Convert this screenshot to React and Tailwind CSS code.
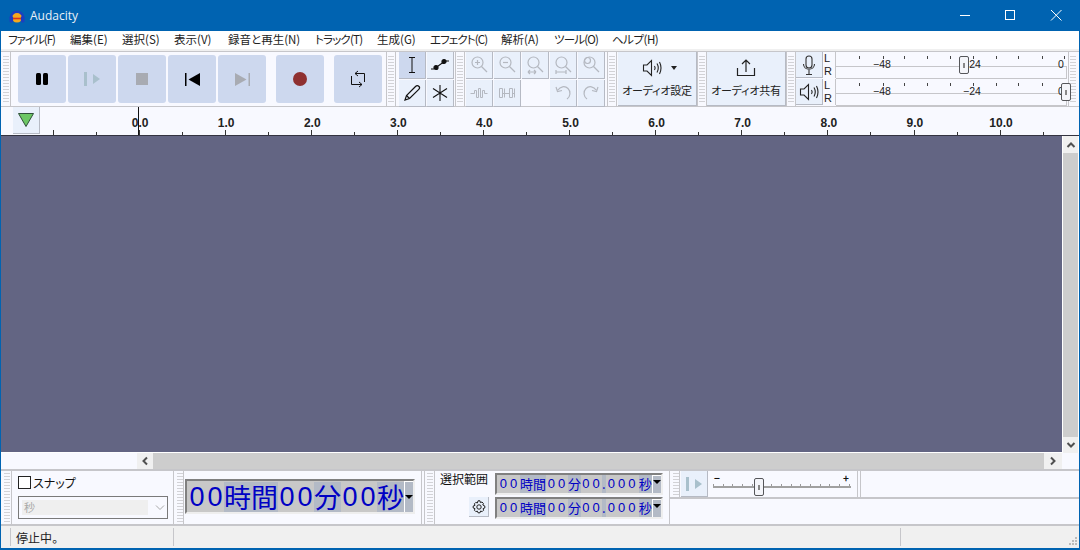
import React from 'react';

const jp = 'font-["Noto_Sans_CJK_JP","Noto_Sans",sans-serif] [font-feature-settings:"palt"]';

// つまみ (toolbar grip)
function Grip({ className = '' }) {
  return (
    <div className={'w-[6px] bg-[repeating-linear-gradient(180deg,#d2d2d6_0,#d2d2d6_1px,transparent_1px,transparent_3px)] ' + className} />
  );
}

function Line() {
  return <div className="w-[1px] shrink-0 bg-[#c6c6ca]" />;
}

function GripBlock({ ml = 'ml-[2px]', my = 'my-[4px]' }) {
  return (
    <>
      <Grip className={'shrink-0 mr-[1px] ' + ml + ' ' + my} />
      <Line />
    </>
  );
}

function TransportBtn({ children, className = '' }) {
  return (
    <div className={'w-[48px] h-[48px] rounded-[3px] bg-[#cdd8ee] flex items-center justify-center ' + className}>
      {children}
    </div>
  );
}

function SmallBtn({ children, className = 'bg-[#e9f0fb]' }) {
  return (
    <div className={'w-[27px] h-[27px] border-r border-b border-[#b6bac4] flex items-center justify-center ' + className}>
      {children}
    </div>
  );
}

function Icon({ size = 20, children, className = '', stroke = 'currentColor', sw = 1 }) {
  return (
    <svg width={size} height={size} viewBox={`0 0 ${size} ${size}`} fill="none" stroke={stroke} strokeWidth={sw} className={className}>
      {children}
    </svg>
  );
}

function ZoomIcon({ children }) {
  return (
    <Icon size={20} stroke="#b4b8c0" sw={1.2}>
      <circle cx="8.5" cy="7.5" r="5.5" />
      <path d="M12.5 11.5 L18 17" />
      {children}
    </Icon>
  );
}

function Wave({ gap }) {
  return (
    <Icon size={20} stroke="#b4b8c0" sw={1}>
      {gap ? (
        <path d="M2.500 5.500V14.500H5.500V5.500H2.500M7.500 5.500V14.500M5.500 10.500H7.500M7.500 10.500H12.500M12.500 5.500V14.500H15.500V5.500H12.500M17.500 5.500V14.500M15.500 10.500H17.500" />
      ) : (
        <path d="M1.500 10.500H5.500V7.500H7.500V14.500H9.500V5.500H11.500V14.500H13.500V7.500H15.500V10.500H18.500" />
      )}
    </Icon>
  );
}

function SpeakerIcon() {
  return (
    <Icon size={20} stroke="#222" sw={1.1}>
      <path d="M1.500 7H5L9.500 2.500V17.500L5 13H1.500Z" />
      <path d="M12.500 8C13.300 9.200 13.300 10.800 12.500 12" />
      <path d="M15 5.500C16.700 8.500 16.700 11.500 15 14.500" />
      <path d="M17.500 4C19.500 8 19.500 12 17.500 16" />
    </Icon>
  );
}

function MeterTicks() {
  const xs = [23, 47, 68, 91, 114, 137, 160, 182, 206, 228];
  return (
    <svg width="232" height="4" className="block">
      {xs.map((x) => (
        <line key={x} x1={x + 0.5} x2={x + 0.5} y1="0" y2="3" stroke="#444" />
      ))}
    </svg>
  );
}

function Meter({ thumbClass }) {
  return (
    <div className="relative w-[232px] h-full border-l border-[#c6c6ca]">
      <div className="pt-[4px] h-[14px]">
        <MeterTicks />
      </div>
      <div className="h-[13px] border-t border-b border-r border-[#c6c6ca]" />
      <div className="absolute left-0 top-[5px] w-full h-[14px] text-[10.5px] leading-[14px] text-[#222] flex font-['Liberation_Sans',sans-serif]">
        <span className="w-[37px]" />
        <span className="w-[17px]">−48</span>
        <span className="w-[73px]" />
        <span className="w-[17px]">−24</span>
        <span className="w-[78px]" />
        <span>0</span>
      </div>
      <div className={'absolute top-[4px] w-[10px] h-[18px] rounded-[2px] border border-[#55565a] bg-[#f4f5fa] flex items-center justify-center ' + thumbClass}>
        <div className="w-[2px] h-[5px] bg-[#888]" />
      </div>
    </div>
  );
}

function Cell({ text, dark, w, track = '' }) {
  return <span className={'flex items-center justify-center h-full ' + w + ' ' + track + ' ' + (dark ? 'bg-[#b3bac6]' : 'bg-[#c8c8c8]')}>{text}</span>;
}

function SmallTime() {
  const t = 'tracking-[3px] pl-[2px] font-["Liberation_Sans",sans-serif]';
  return (
    <div className="w-[168px] h-[22px] flex bg-[#c8c8c8] border-2 border-t-[#808080] border-l-[#808080] border-b-[#eeeeee] border-r-[#eeeeee] text-[13px] text-[#0000c4]">
      <div className="flex h-full pl-[1px] w-[155px] whitespace-nowrap leading-[18px]">
        <Cell text="00" w="w-[22px]" track={t} />
        <Cell text="時間" w="w-[26px]" dark />
        <Cell text="00" w="w-[22px]" track={t} />
        <Cell text="分" w="w-[13px]" dark />
        <Cell text="00" w="w-[21px]" track={t} />
        <Cell text="." w="w-[4px]" dark />
        <Cell text="000" w="w-[33px]" track={t} />
        <Cell text="秒" w="w-[14px]" dark />
      </div>
      <div className="w-[9px] h-full bg-[#b3bac6] border-l border-t border-white flex items-start justify-center pt-[4px]">
        <div className="w-0 h-0 border-x-[4px] border-x-transparent border-t-[4px] border-t-black" />
      </div>
    </div>
  );
}

function ScrollBtn({ d, className = 'w-[16px]' }) {
  return (
    <div className={'h-[16px] bg-[#f0f0f0] flex items-center justify-center ' + className}>
      <svg width="10" height="10" viewBox="0 0 10 10" fill="none" stroke="#505050" strokeWidth="2">
        <path d={d} />
      </svg>
    </div>
  );
}

function Ruler() {
  const ticks = [];
  for (let i = 0; i < 24; i++) ticks.push(i);
  return (
    <div className="h-[28px] flex bg-[#f8f9ff] shrink-0">
      <div className="w-[12px] shrink-0" />
      <div className="w-[27px] h-[27px] bg-[#e9f0fb] border-r border-b border-[#b6bac4] flex items-center justify-center shrink-0">
        <svg width="16" height="14" viewBox="0 0 16 14">
          <path d="M0.5 0.5H15.5L8 13.5Z" fill="#6cc764" stroke="#30503a" />
        </svg>
      </div>
      <div className="relative flex-1 flex flex-col min-w-0">
        <div className="h-[23px] flex items-end pl-[57px] text-[12px] leading-[14px] font-bold text-[#222] font-['Liberation_Sans',sans-serif]">
          {['0.0', '1.0', '2.0', '3.0', '4.0', '5.0', '6.0', '7.0', '8.0', '9.0', '10.0'].map((t) => (
            <span key={t} className="w-[86.1px] text-center shrink-0">{t}</span>
          ))}
        </div>
        <svg width="1039" height="5" className="block">
          {ticks.map((i) => (
            <line key={i} x1={Math.round(12.5 + i * 43.05) + 0.5} x2={Math.round(12.5 + i * 43.05) + 0.5} y1={i % 2 === 0 ? 0 : 2} y2="5" stroke="#333" />
          ))}
        </svg>
        <div className="absolute left-[98px] top-0 bottom-0 w-[1px] bg-[#111]" />
      </div>
    </div>
  );
}

export default function App() {
  return (
    <div className={'w-[1080px] h-[550px] overflow-hidden flex flex-col border-x border-b-2 border-[#0063b1] bg-[#f0f0f0] text-[#111] ' + jp}>
      {/* title bar */}
      <div className="h-[31px] shrink-0 bg-[#0063b1] flex items-center text-white -mx-[1px]">
        <svg width="16" height="16" viewBox="0 0 16 16" className="ml-[9px]">
          <circle cx="8" cy="9" r="5.5" fill="#f6a81c" />
          <path d="M1.800 10a6.200 6.200 0 0 1 12.400 0" fill="none" stroke="#1c3fc0" strokeWidth="2.400" />
          <rect x="0.500" y="8" width="3.600" height="6.500" rx="1.500" fill="#1c3fc0" />
          <rect x="11.900" y="8" width="3.600" height="6.500" rx="1.500" fill="#1c3fc0" />
          <path d="M4 10.500H12" stroke="#d83020" strokeWidth="1.600" />
        </svg>
        <span className="ml-[5px] text-[12px] text-[#e8f0f8] flex-1 font-['Open_Sans',sans-serif]">Audacity</span>
        <svg width="120" height="31" viewBox="0 0 120 31" fill="none" stroke="#fff">
          <path d="M0 15.5H10" />
          <rect x="45.5" y="10.5" width="9" height="9" />
          <path d="M91 10L101.5 20.5M101.5 10L91 20.5" />
        </svg>
      </div>

      {/* menu */}
      <div className="h-[18px] shrink-0 bg-white flex items-center text-[11.5px] text-[#222] whitespace-nowrap pl-[7px]">
        <span className="w-[62px] tracking-[-1px]">ファイル(F)</span>
        <span className="w-[52px]">編集(E)</span>
        <span className="w-[52px]">選択(S)</span>
        <span className="w-[54px]">表示(V)</span>
        <span className="w-[87px]">録音と再生(N)</span>
        <span className="w-[62px] tracking-[-0.8px]">トラック(T)</span>
        <span className="w-[53px]">生成(G)</span>
        <span className="w-[71px] tracking-[-0.9px]">エフェクト(C)</span>
        <span className="w-[53px]">解析(A)</span>
        <span className="w-[58px] tracking-[-0.8px]">ツール(O)</span>
        <span className="tracking-[-0.5px]">ヘルプ(H)</span>
      </div>
      <div className="h-[2px] shrink-0 bg-[#f0f0f0]" />

      {/* top toolbars */}
      <div className="h-[56px] shrink-0 flex border-y border-[#c6c6ca] bg-[#f8f9ff]">
        <GripBlock />
        <div className="flex items-center w-[375px] pl-[7px] shrink-0">
          <TransportBtn>
            <svg width="14" height="14"><rect x="1" y="1" width="5" height="12" rx="1.5" fill="#000" /><rect x="8" y="1" width="5" height="12" rx="1.5" fill="#000" /></svg>
          </TransportBtn>
          <TransportBtn className="ml-[2px]">
            <svg width="16" height="14"><rect x="0" y="0" width="3" height="14" fill="#a9c0cc" /><path d="M9 2V12L16 7Z" fill="#a9c0cc" /></svg>
          </TransportBtn>
          <TransportBtn className="ml-[2px]">
            <div className="w-[12px] h-[12px] bg-[#a8abb2]" />
          </TransportBtn>
          <TransportBtn className="ml-[2px]">
            <svg width="15" height="13"><rect x="0" y="0" width="1.5" height="13" fill="#000" /><path d="M3.5 6.5L15 0V13Z" fill="#000" /></svg>
          </TransportBtn>
          <TransportBtn className="ml-[2px]">
            <svg width="15" height="13"><rect x="13.5" y="0" width="1.5" height="13" fill="#a8abb2" /><path d="M0 0V13L11.5 6.5Z" fill="#a8abb2" /></svg>
          </TransportBtn>
          <TransportBtn className="ml-[10px]">
            <div className="w-[14px] h-[14px] rounded-full bg-[#8f3030]" />
          </TransportBtn>
          <TransportBtn className="ml-[10px]">
            <svg width="16" height="18" viewBox="0 0 16 18" fill="none" stroke="#111">
              <path d="M14.500 12V3.500H5M8 1L5 3.500L8 6" />
              <path d="M1.500 6V14.500H12M9 12L12 14.500L9 17" />
            </svg>
          </TransportBtn>
        </div>
        <Line />
        <GripBlock ml="ml-[1px]" />
        <div className="w-[59px] pl-[3px] grid grid-cols-[27px_27px] gap-x-[1px] gap-y-[1px] content-start shrink-0">
          <SmallBtn className="bg-[#cdd8ee]">
            <svg width="10" height="16" fill="none" stroke="#111"><path d="M2 .5H8M2 15.500H8M5 .5V15.500" /></svg>
          </SmallBtn>
          <SmallBtn>
            <svg width="20" height="14" fill="none" stroke="#111" strokeWidth="1.2"><path d="M1 11H4L15 3H19" /><circle cx="6" cy="9.5" r="2" fill="#111" /><circle cx="14" cy="3.5" r="2" fill="#111" /></svg>
          </SmallBtn>
          <SmallBtn>
            <svg width="18" height="18" fill="none" stroke="#111" strokeWidth="1.2"><path d="M2 16L3.500 11.500L12.500 2.500C13.500 1.500 15 1.500 16 2.500C16.700 3.300 16.600 4.600 15.800 5.400L6.500 14.500Z" /><path d="M3.500 11.500L6.500 14.500" /></svg>
          </SmallBtn>
          <SmallBtn>
            <svg width="16" height="16" stroke="#111" strokeWidth="1.1"><path d="M8 0V16M1 3.500L15 12.500M15 3.500L1 12.500" /></svg>
          </SmallBtn>
        </div>
        <Line />
        <GripBlock ml="ml-[1px]" />
        <div className="w-[142px] pl-[1px] grid grid-cols-[repeat(5,27px)] gap-x-[1px] gap-y-[1px] content-start shrink-0">
          <SmallBtn><ZoomIcon><path d="M6 7.500H11M8.500 5V10" /></ZoomIcon></SmallBtn>
          <SmallBtn><ZoomIcon><path d="M6 7.500H11" /></ZoomIcon></SmallBtn>
          <SmallBtn><ZoomIcon><path d="M3 17H11M3 17L5 15M3 17L5 19M11 17L9 15M11 17L9 19" /></ZoomIcon></SmallBtn>
          <SmallBtn><ZoomIcon><path d="M3 15V19M13 15V19M3 17H13" /></ZoomIcon></SmallBtn>
          <SmallBtn><ZoomIcon><circle cx="6.500" cy="5.500" r="3" /></ZoomIcon></SmallBtn>
          <SmallBtn><Wave /></SmallBtn>
          <SmallBtn><Wave gap /></SmallBtn>
          <div className="w-[27px] h-[27px]" />
          <SmallBtn>
            <svg width="18" height="18" fill="none" stroke="#b4b8c0" strokeWidth="1.2"><path d="M4 6C6 2.500 11 1.500 14 4.500C17 7.500 16.500 12.500 13 15M2 3L3.500 7.500L8 6.500" /></svg>
          </SmallBtn>
          <SmallBtn>
            <svg width="18" height="18" fill="none" stroke="#b4b8c0" strokeWidth="1.2"><path d="M14 6C12 2.500 7 1.500 4 4.500C1 7.500 1.500 12.500 5 15M16 3L14.500 7.500L10 6.500" /></svg>
          </SmallBtn>
        </div>
        <Line />
        <GripBlock ml="ml-[1px]" />
        <div className="w-[79px] h-full bg-[#e9f0fb] border-r border-b border-[#b6bac4] flex flex-col items-center shrink-0 ml-[1px]">
          <div className="h-[31px] flex items-center gap-[9px] pl-[4px]">
            <SpeakerIcon />
            <div className="w-0 h-0 border-x-[3px] border-x-transparent border-t-[4px] border-t-[#222]" />
          </div>
          <span className="text-[11px] leading-[14px] text-[#222] whitespace-nowrap tracking-[-0.2px]">オーディオ設定</span>
        </div>
        <Line />
        <GripBlock ml="ml-[1px]" />
        <div className="w-[79px] h-full bg-[#e9f0fb] border-r border-b border-[#b6bac4] flex flex-col items-center shrink-0">
          <div className="h-[31px] flex items-center">
            <svg width="20" height="20" fill="none" stroke="#222" strokeWidth="1.2"><path d="M1.500 10V17.500H18.500V10" /><path d="M10 14V2M6 6L10 2L14 6" /></svg>
          </div>
          <span className="text-[11px] leading-[14px] text-[#222] whitespace-nowrap tracking-[-0.2px]">オーディオ共有</span>
        </div>
        <Line />
        <GripBlock ml="ml-[1px]" />
        <div className="flex flex-col gap-[1px] shrink-0">
          {[0, 1].map((i) => (
            <div key={i} className="flex h-[26px] items-stretch">
              <div className="w-[27px] h-[26px] bg-[#e9f0fb] border-r border-b border-[#b6bac4] flex items-center justify-center">
                {i === 0 ? (
                  <svg width="14" height="20" fill="none" stroke="#333" strokeWidth="1.1"><rect x="4" y="1" width="6" height="12" rx="3" /><path d="M1.500 9C1.500 16 12.500 16 12.500 9M7 15V19M4 19.500H10" /></svg>
                ) : (
                  <SpeakerIcon />
                )}
              </div>
              <div className="w-[11px] ml-[1px] text-[11px] leading-[13px] text-[#222] flex flex-col font-['Liberation_Sans',sans-serif]">
                <span>L</span>
                <span>R</span>
              </div>
              {i === 0 ? <Meter thumbClass="left-[123px]" /> : <Meter thumbClass="left-[225px]" />}
            </div>
          ))}
        </div>
        <div className="w-[1px] ml-[1px] bg-[#c6c6ca]" />
        <Grip className="ml-[1px] my-[4px]" />
      </div>

      <Ruler />
      <div className="h-[1px] shrink-0 bg-[#333340]" />

      {/* track panel */}
      <div className="flex-1 min-h-0 flex bg-white">
        <div className="flex-1 bg-[#636583] mb-[1px]" />
        <div className="w-[15px] mx-[1px] flex flex-col bg-[#f0f0f0] pt-[1px]">
          <ScrollBtn d="M1.500 7L5 3.500L8.500 7" className="w-[15px]" />
          <div className="flex-1 bg-[#cdcdcd]" />
          <ScrollBtn d="M1.500 3L5 6.500L8.500 3" className="w-[15px]" />
        </div>
      </div>
      <div className="h-[16px] shrink-0 flex bg-[#f8f9ff]">
        <div className="w-[136px]" />
        <ScrollBtn d="M7 1.500L3.500 5L7 8.500" />
        <div className="flex-1 bg-[#cdcdcd]" />
        <ScrollBtn d="M3 1.500L6.500 5L3 8.500" className="w-[18px]" />
        <div className="w-[17px]" />
      </div>

      {/* bottom toolbars */}
      <div className="h-[57px] shrink-0 flex border-y-2 border-[#c6c6ca] bg-[#f8f9ff]">
        <Grip className="ml-[3px] mr-[1px] my-[2px]" />
        <Line />
        <div className="w-[161px] pl-[6px] pt-[4px] shrink-0">
          <div className="flex items-center h-[15px] text-[12px] text-[#111]">
            <div className="w-[13px] h-[13px] border border-[#222] bg-white mr-[2px]" />
            スナップ
          </div>
          <div className="mt-[6px] w-[150px] h-[23px] border border-[#7a7a7a] bg-[#f8f9ff] flex items-center pl-[3px]">
            <div className="w-[126px] h-[15px] bg-[#efefef] pl-[2px] text-[11px] leading-[15px] text-[#a8a8a8]">秒</div>
            <svg width="10" height="6" className="ml-[7px]" fill="none" stroke="#a8a8a8"><path d="M1 .5L5 4.500L9 .5" /></svg>
          </div>
        </div>
        <Line />
        <Grip className="ml-[3px] my-[2px]" />
        <Line />
        <div className="w-[237px] pl-[1px] pt-[8px] shrink-0">
          <div className="w-[230px] h-[35px] flex bg-[#c8c8c8] border-2 border-t-[#808080] border-l-[#808080] border-b-[#eeeeee] border-r-[#eeeeee] text-[#0000c4] text-[27px] whitespace-nowrap">
            <div className="flex h-[30px] my-auto pl-[1px] w-[218px] leading-[30px]">
              <Cell text="00" w="w-[36px]" track='tracking-[3px] pl-[3px] font-["Liberation_Sans",sans-serif]' />
              <Cell text="時間" w="w-[54px]" dark />
              <Cell text="00" w="w-[36px]" track='tracking-[3px] pl-[3px] font-["Liberation_Sans",sans-serif]' />
              <Cell text="分" w="w-[27px]" dark />
              <Cell text="00" w="w-[36px]" track='tracking-[3px] pl-[3px] font-["Liberation_Sans",sans-serif]' />
              <Cell text="秒" w="w-[27px]" dark />
            </div>
            <div className="w-[9px] h-full bg-[#b3bac6] border-l border-t border-white flex items-center justify-center">
              <div className="w-0 h-0 border-x-[4px] border-x-transparent border-t-[4px] border-t-black" />
            </div>
          </div>
        </div>
        <Line />
        <div className="w-[2px]" />
        <Line />
        <Grip className="ml-[2px] mr-[1px] my-[2px]" />
        <Line />
        <div className="w-[234px] flex shrink-0">
          <div className="w-[60px] shrink-0 flex flex-col items-end">
            <span className="text-[12px] leading-[14px] mt-[1px] mr-[7px] whitespace-nowrap">選択範囲</span>
            <div className="mt-[11px] mr-[6px] w-[20px] h-[20px] bg-[#e9f0fb] border-r border-b border-[#b6bac4] flex items-center justify-center">
              <svg width="14" height="14" viewBox="0 0 14 14" fill="none" stroke="#222"><circle cx="7" cy="7" r="2.200" /><path d="M6 .8H8L8.400 2.600L10 2L11.400 3.400L10.800 5L12.800 6V8L11.100 8.600L11.600 10.200L10.200 11.600L8.600 11L8 12.800H6L5.400 11.100L3.800 11.600L2.400 10.200L3 8.600L1.200 8V6L3 5.400L2.400 3.800L3.800 2.400L5.400 3Z" /></svg>
            </div>
          </div>
          <div className="flex flex-col gap-[2px] pt-[2px]">
            <SmallTime />
            <SmallTime />
          </div>
        </div>
        <Line />
        <div className="flex-1 flex flex-col min-w-0">
          <div className="h-[28px] shrink-0 flex border-b-2 border-[#c6c6ca]">
            <Grip className="ml-[3px] my-[2px]" />
            <Line />
            <div className="w-[177px] flex shrink-0 pl-[1px]">
              <div className="w-[27px] h-[26px] bg-[#e9f0fb] border-r border-b border-[#b6bac4] flex items-center justify-center">
                <svg width="16" height="14"><rect x="0" y="0" width="3" height="14" fill="#a9c0cc" /><path d="M9 2V12L16 7Z" fill="#a9c0cc" /></svg>
              </div>
              <div className="relative flex-1 ml-[5px] mr-[5px] pt-[2px]">
                <div className="flex justify-between text-[10px] leading-[10px] font-bold px-[1px] pr-[3px]">
                  <span>−</span>
                  <span>+</span>
                </div>
                <svg width="138" height="5" className="block mt-[1px]">
                  {Array.from({ length: 15 }).map((_, i) => (
                    <line key={i} x1={Math.round(i * 9.7) + 0.5} x2={Math.round(i * 9.7) + 0.5} y1="0" y2="3" stroke="#999" />
                  ))}
                  <rect x="0" y="2" width="138" height="2" fill="#a0a0a0" />
                </svg>
                <div className="absolute left-[41px] top-[7px] w-[10px] h-[18px] rounded-[2px] border border-[#55565a] bg-[#f4f5fa] flex items-center justify-center">
                  <div className="w-[2px] h-[5px] bg-[#888]" />
                </div>
              </div>
            </div>
            <Line />
            <div className="w-[2px]" />
            <div className="flex-1 border-l border-[#c6c6ca]" />
          </div>
          <div className="flex-1" />
        </div>
      </div>

      {/* status bar */}
      <div className="h-[22px] shrink-0 flex items-stretch bg-[#f0f0f0] text-[12px] text-[#222] py-[2px]">
        <div className="w-[9px]" />
        <Line />
        <span className="w-[162px] pl-[5px] leading-[20px]">停止中。</span>
        <Line />
        <div className="w-[726px]" />
        <Line />
        <div className="flex-1 flex items-end justify-end pr-[1px]">
          <svg width="9" height="9" fill="#bcbcbc">
            <rect x="6" y="0" width="2" height="2" /><rect x="3" y="3" width="2" height="2" /><rect x="6" y="3" width="2" height="2" />
            <rect x="0" y="6" width="2" height="2" /><rect x="3" y="6" width="2" height="2" /><rect x="6" y="6" width="2" height="2" />
          </svg>
        </div>
      </div>
    </div>
  );
}
